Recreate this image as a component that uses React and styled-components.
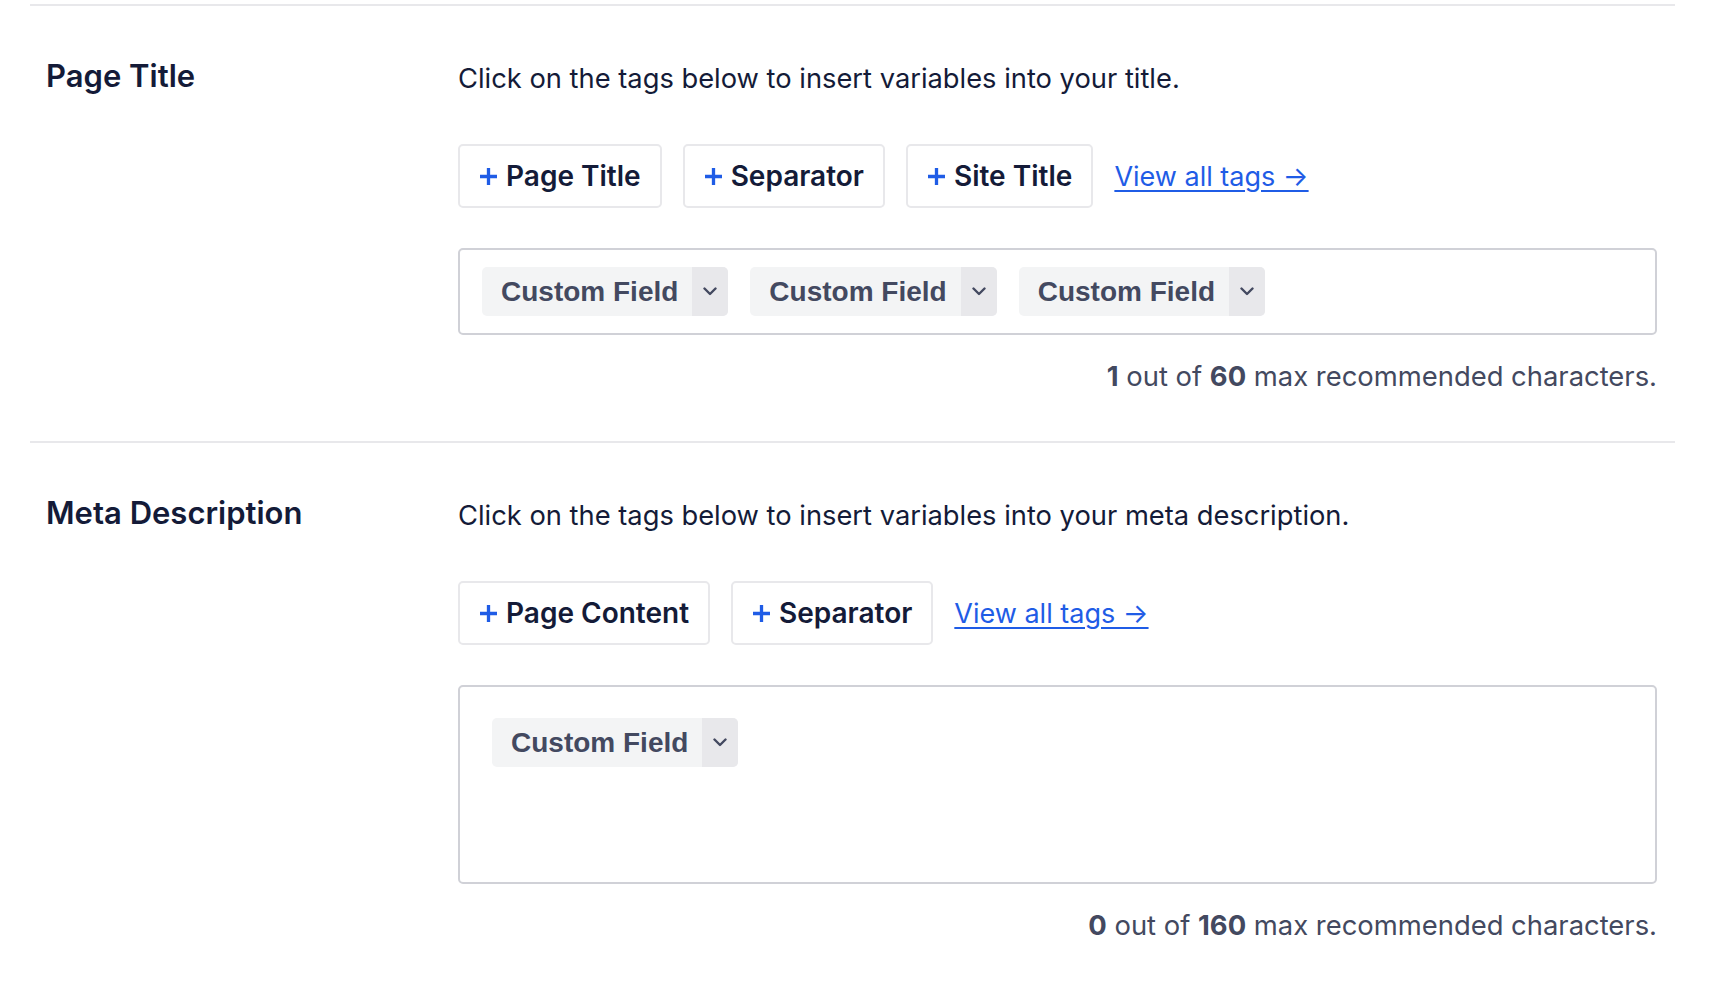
import React from "react";
import styled, { createGlobalStyle } from "styled-components";

const GlobalStyle = createGlobalStyle`
  body {
    margin: 0;
    background: #ffffff;
    font-family: Inter, "Noto Sans", sans-serif;
    color: #141b38;
  }
`;

const sections = [
  {
    title: "Page Title",
    help: "Click on the tags below to insert variables into your title.",
    tags: ["Page Title", "Separator", "Site Title"],
    fields: 3,
    tall: false,
    count: 1,
    max: 60,
  },
  {
    title: "Meta Description",
    help: "Click on the tags below to insert variables into your meta description.",
    tags: ["Page Content", "Separator"],
    fields: 1,
    tall: true,
    count: 0,
    max: 160,
  },
];

function PlusIcon() {
  return (
    <svg width="19" height="19" viewBox="0 0 19 19">
      <path d="M9.5 1v17M1 9.5h17" stroke="#1f5ce6" strokeWidth="3.3" fill="none" />
    </svg>
  );
}

function Chevron() {
  return (
    <svg width="14" height="9" viewBox="0 0 14 9">
      <path
        d="M1.5 1.5l5.5 5.5 5.5-5.5"
        stroke="#434960"
        strokeWidth="2.4"
        fill="none"
        strokeLinecap="round"
        strokeLinejoin="round"
      />
    </svg>
  );
}

export default function App() {
  return (
    <>
      <GlobalStyle />
      <Page>
        {sections.map((s, i) => (
          <Section key={i}>
            <Label>{s.title}</Label>
            <Content>
              <Help>{s.help}</Help>
              <TagRow>
                {s.tags.map((t) => (
                  <TagButton key={t}>
                    <PlusIcon />
                    {t}
                  </TagButton>
                ))}
                <AllTags href="#">View all tags →</AllTags>
              </TagRow>
              <Editor $tall={s.tall}>
                {Array.from({ length: s.fields }).map((_, j) => (
                  <Field key={j}>
                    <FieldName>Custom Field</FieldName>
                    <FieldToggle>
                      <Chevron />
                    </FieldToggle>
                  </Field>
                ))}
              </Editor>
              <Counter>
                <b>{s.count}</b> out of <b>{s.max}</b> max recommended characters.
              </Counter>
            </Content>
          </Section>
        ))}
      </Page>
    </>
  );
}

const Page = styled.div`
  padding: 4px 41px 0 30px;
`;

const Section = styled.div`
  display: flex;
  border-top: 2px solid #e8e8eb;
  padding: 55px 18px 47px 16px;
`;

const Label = styled.h2`
  width: 412px;
  flex-shrink: 0;
  margin: 0;
  font-size: 31px;
  line-height: 30px;
  font-weight: 600;
  color: #141b38;
`;

const Content = styled.div`
  flex: 1;
  display: flex;
  flex-direction: column;
`;

const Help = styled.p`
  margin: 0;
  font-size: 27.3px;
  line-height: 36px;
  color: #141b38;
`;

const TagRow = styled.div`
  display: flex;
  align-items: center;
  gap: 21px;
  margin-top: 47px;
`;

const TagButton = styled.div`
  display: flex;
  align-items: center;
  gap: 8px;
  height: 64px;
  box-sizing: border-box;
  padding: 0 19px;
  border: 2px solid #e8e8eb;
  border-radius: 5px;
  font-size: 28px;
  font-weight: 600;
  color: #141b38;
`;

const AllTags = styled.a`
  font-size: 27px;
  color: #1f5ce6;
  text-decoration: underline;
  text-decoration-thickness: 2px;
  text-underline-offset: 4px;
`;

const Editor = styled.div`
  display: flex;
  align-items: flex-start;
  gap: 22px;
  margin-top: 40px;
  box-sizing: border-box;
  border: 2px solid #d0d1d7;
  border-radius: 5px;
  padding: ${(p) => (p.$tall ? "31px 32px" : "17px 22px")};
  min-height: ${(p) => (p.$tall ? "199px" : "85px")};
`;

const Field = styled.div`
  display: flex;
  height: 49px;
  border-radius: 5px;
  overflow: hidden;
  background: #f3f4f5;
`;

const FieldName = styled.span`
  display: flex;
  align-items: center;
  padding: 0 14px 0 19px;
  font-family: "Liberation Sans", Arial, sans-serif;
  font-size: 28px;
  font-weight: 700;
  color: #434960;
`;

const FieldToggle = styled.span`
  display: flex;
  align-items: center;
  justify-content: center;
  width: 36px;
  background: #e8e8eb;
`;

const Counter = styled.div`
  margin-top: 23px;
  text-align: right;
  font-size: 27.4px;
  line-height: 36px;
  color: #434960;

  b {
    font-weight: 700;
  }
`;
